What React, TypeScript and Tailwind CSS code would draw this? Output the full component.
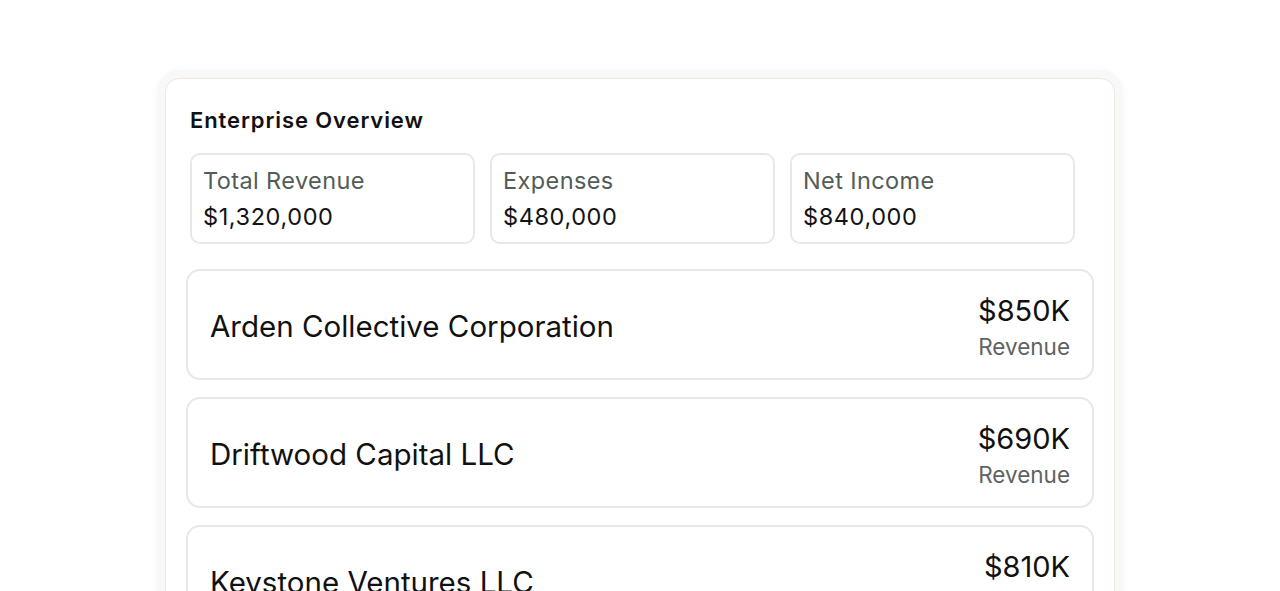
import React from 'react';

const stats = [
  { label: 'Total Revenue', value: '$1,320,000' },
  { label: 'Expenses', value: '$480,000' },
  { label: 'Net Income', value: '$840,000' },
];

const companies = [
  { name: 'Arden Collective Corporation', amount: '$850K' },
  { name: 'Driftwood Capital LLC', amount: '$690K' },
  { name: 'Keystone Ventures LLC', amount: '$810K' },
];

export default function App() {
  return (
    <div className="h-[591px] overflow-hidden bg-white font-['Inter',sans-serif] text-[#111111]">
      <div className="pl-[165px] pt-[78px]">
        <div className="w-[950px] rounded-[14px] border border-[#efe7dc] bg-white px-6 pt-[27px] pb-6 shadow-[0_0_0_8px_#f8f8f8,0_0_10px_8px_rgba(0,0,0,0.03)]">
          <h1 className="text-[22px] font-semibold leading-7 tracking-[0.9px]">Enterprise Overview</h1>
          <div className="mt-[19px] grid w-[885px] grid-cols-3 gap-[15px]">
            {stats.map((s) => (
              <div key={s.label} className="h-[91px] rounded-[10px] border-2 border-[#e8e8e8] px-[11px] pt-[11px]">
                <p className="text-[23.5px] leading-[30px] tracking-[0.4px] text-[#535c56]">{s.label}</p>
                <p className="mt-[6px] text-[23.5px] leading-[30px] tracking-[0.6px] text-[#141414]">{s.value}</p>
              </div>
            ))}
          </div>
          <div className="-mx-1 mt-[25px] flex flex-col gap-[17px]">
            {companies.map((c) => (
              <div
                key={c.name}
                className="flex h-[111px] items-center justify-between rounded-[14px] border-2 border-[#e8e8e8] px-[22px]"
              >
                <span className="pt-[2px] text-[29.5px] leading-9">{c.name}</span>
                <div className="flex flex-col items-end pt-[8px]">
                  <span className="text-[29px] leading-9">{c.amount}</span>
                  <span className="text-[22.5px] leading-9 text-[#5f6360]">Revenue</span>
                </div>
              </div>
            ))}
          </div>
        </div>
      </div>
    </div>
  );
}
